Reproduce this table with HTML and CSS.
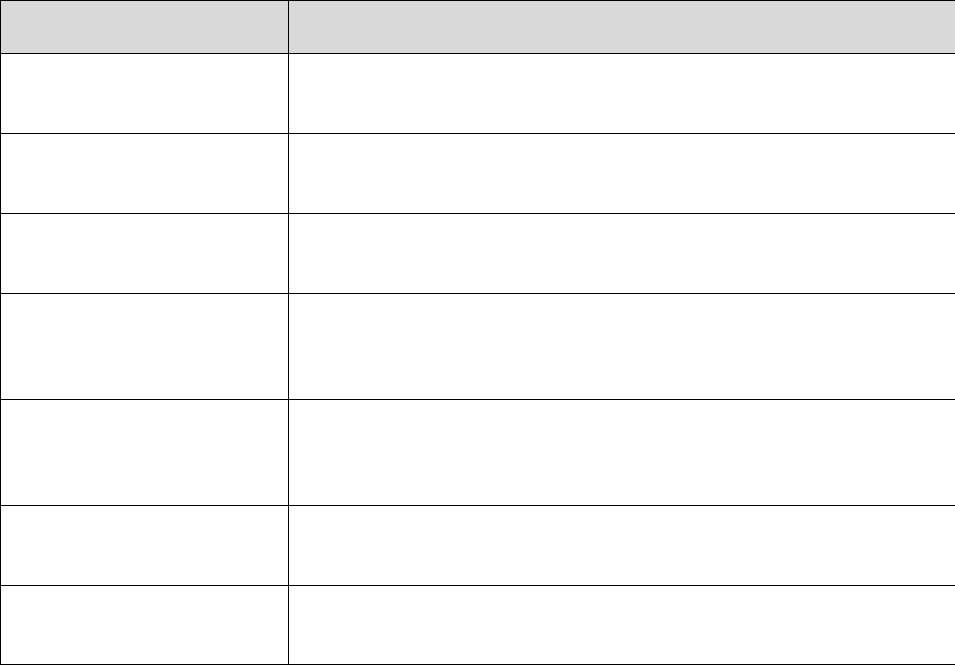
FILE: index.html
```html
<!DOCTYPE html>
<html lang="en">
<head>
<meta charset="utf-8">
<title>Table</title>
<link rel="stylesheet" href="styles.css">
</head>
<body>
<table class="grid">
  <colgroup>
    <col class="col-a">
    <col class="col-b">
  </colgroup>
  <thead>
    <tr class="row-head"><th></th><th></th></tr>
  </thead>
  <tbody>
    <tr class="row-std"><td></td><td></td></tr>
    <tr class="row-std"><td></td><td></td></tr>
    <tr class="row-std"><td></td><td></td></tr>
    <tr class="row-tall"><td></td><td></td></tr>
    <tr class="row-tall"><td></td><td></td></tr>
    <tr class="row-std"><td></td><td></td></tr>
    <tr class="row-last"><td></td><td></td></tr>
  </tbody>
</table>
</body>
</html>
```

FILE: styles.css
```css
html, body {
  margin: 0;
  padding: 0;
  background: #ffffff;
}
body {
  font-family: "Liberation Sans", Arial, sans-serif;
  width: 955px;
  height: 665px;
  overflow: hidden;
}
.grid {
  border-collapse: collapse;
  table-layout: fixed;
  width: 955px;
}
.col-a { width: 288px; }
.col-b { width: 667px; }
.grid th,
.grid td {
  border: 1px solid #000000;
  padding: 0;
}
.grid th {
  background: #d9d9d9;
}
.row-head { height: 53px; }
.row-std { height: 80px; }
.row-tall { height: 106px; }
.row-last { height: 79px; }
```
